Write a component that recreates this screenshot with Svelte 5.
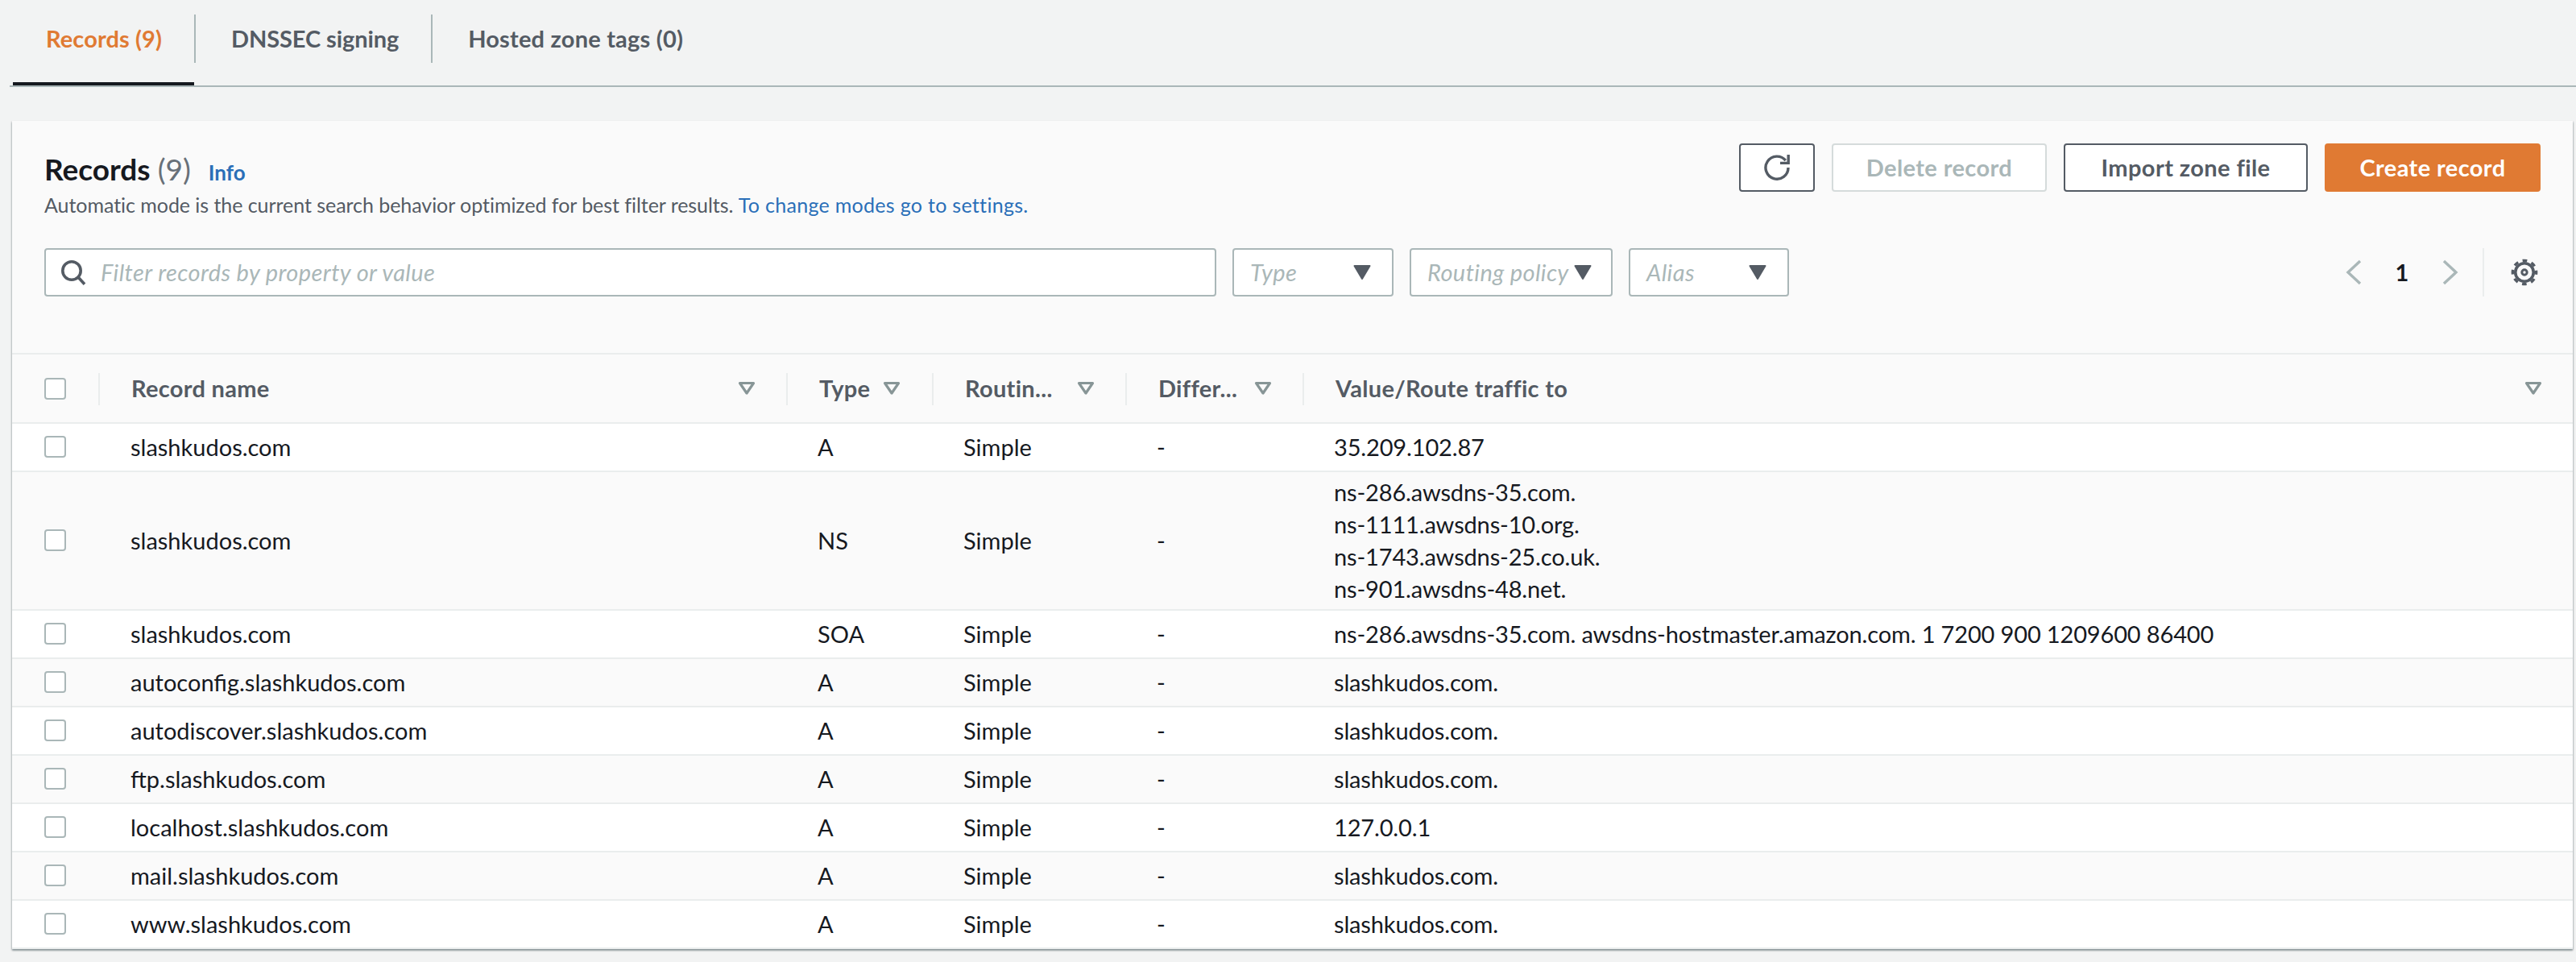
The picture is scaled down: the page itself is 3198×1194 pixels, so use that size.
<script>
  const tabs = [
    { label: "Records (9)", active: true },
    { label: "DNSSEC signing" },
    { label: "Hosted zone tags (0)" },
  ];

  const columns = ["Record name", "Type", "Routin...", "Differ...", "Value/Route traffic to"];

  const records = [
    { name: "slashkudos.com", type: "A", value: ["35.209.102.87"] },
    {
      name: "slashkudos.com",
      type: "NS",
      value: [
        "ns-286.awsdns-35.com.",
        "ns-1111.awsdns-10.org.",
        "ns-1743.awsdns-25.co.uk.",
        "ns-901.awsdns-48.net.",
      ],
    },
    {
      name: "slashkudos.com",
      type: "SOA",
      value: ["ns-286.awsdns-35.com. awsdns-hostmaster.amazon.com. 1 7200 900 1209600 86400"],
    },
    { name: "autoconfig.slashkudos.com", type: "A", value: ["slashkudos.com."] },
    { name: "autodiscover.slashkudos.com", type: "A", value: ["slashkudos.com."] },
    { name: "ftp.slashkudos.com", type: "A", value: ["slashkudos.com."] },
    { name: "localhost.slashkudos.com", type: "A", value: ["127.0.0.1"] },
    { name: "mail.slashkudos.com", type: "A", value: ["slashkudos.com."] },
    { name: "www.slashkudos.com", type: "A", value: ["slashkudos.com."] },
  ];

  const selects = [
    { label: "Type", width: "select--type" },
    { label: "Routing policy", width: "select--routing" },
    { label: "Alias", width: "select--alias" },
  ];
</script>

<div class="page">
  <div class="tabs">
    {#each tabs as tab}
      <div class="tab" class:tab--active={tab.active}><span class="tab__label">{tab.label}</span></div>
    {/each}
  </div>

  <section class="panel">
    <header class="panel__header">
      <div class="panel__top">
        <div class="panel__title">
          <h2>Records <span class="count">(9)</span> <a class="info" href="#info">Info</a></h2>
          <p>
            Automatic mode is the current search behavior optimized for best filter results.
            <a href="#settings">To change modes go to settings.</a>
          </p>
        </div>
        <div class="actions">
          <button class="btn btn--icon" aria-label="Refresh">
            <svg width="32" height="32" viewBox="0 0 16 16" fill="none" stroke="#545b64" stroke-width="1.7">
              <path d="M13.4 3.6A7 7 0 1 0 15 8" />
              <path d="M15.1 0v5.2H10" />
            </svg>
          </button>
          <button class="btn btn--disabled">Delete record</button>
          <button class="btn btn--import">Import zone file</button>
          <button class="btn btn--primary">Create record</button>
        </div>
      </div>

      <div class="filters">
        <div class="search">
          <svg width="32" height="32" viewBox="0 0 16 16" fill="none" stroke="#545b64" stroke-width="1.8">
            <circle cx="7" cy="7" r="5.6" />
            <path d="M11 11l4 4.4" />
          </svg>
          <span>Filter records by property or value</span>
        </div>
        {#each selects as select}
          <div class="select {select.width}">
            <span>{select.label}</span>
            <svg width="22" height="18" viewBox="0 0 22 18">
              <path d="M1.5 1h19L11 17z" fill="#545b64" stroke="#545b64" stroke-linejoin="round" stroke-width="2" />
            </svg>
          </div>
        {/each}
        <div class="pager">
          <svg width="20" height="32" viewBox="0 0 20 32" fill="none" stroke="#aab7b8" stroke-width="3.4">
            <path d="M18 2L3 16l15 14" />
          </svg>
          <span class="pager__num">1</span>
          <svg width="20" height="32" viewBox="0 0 20 32" fill="none" stroke="#aab7b8" stroke-width="3.4">
            <path d="M2 2l15 14L2 30" />
          </svg>
          <span class="pager__divider"></span>
          <svg width="34" height="34" viewBox="0 0 16 16" fill="none" stroke="#545b64">
            <circle cx="8" cy="8" r="5.3" stroke-width="1.7" />
            <circle cx="8" cy="8" r="6.9" stroke-width="1.6" stroke-dasharray="2.7 2.72" stroke-dashoffset="1.35" />
            <circle cx="8" cy="8" r="1.5" stroke-width="1.4" />
          </svg>
        </div>
      </div>
    </header>

    <div class="table">
      <div class="row row--head">
        <div class="cell cell--check"><span class="checkbox"></span></div>
        {#each columns as col, i}
          <div class="cell cell--head" class:cell--tight={i === 1}>
            <span>{col}</span>
            <svg class="filter" width="22" height="18" viewBox="0 0 22 18" fill="none" stroke="#879596" stroke-width="3.2" stroke-linejoin="round">
              <path d="M2.5 2.5h17L11 15z" />
            </svg>
          </div>
        {/each}
      </div>
      {#each records as record}
        <div class="row row--body">
          <div class="cell cell--check"><span class="checkbox"></span></div>
          <div class="cell cell--name">{record.name}</div>
          <div class="cell">{record.type}</div>
          <div class="cell">Simple</div>
          <div class="cell">-</div>
          <div class="cell cell--value">
            {#each record.value as line}
              <div>{line}</div>
            {/each}
          </div>
        </div>
      {/each}
    </div>
  </section>
</div>

<style>
  :global(body) {
    background: #f2f3f3;
  }

  .page {
    height: 1194px;
    box-sizing: border-box;
    font-family: "Lato", "Open Sans", sans-serif;
    font-size: 29px;
    line-height: 40px;
    color: #16191f;
    overflow: hidden;
  }

  .tabs {
    display: flex;
    height: 106px;
    margin: 0 0 0 12px;
    border-bottom: 2px solid #aab7b8;
  }

  .tab {
    position: relative;
    height: 106px;
    box-sizing: border-box;
    padding: 18px 0 0 3px;
    font-weight: 700;
    letter-spacing: -0.1px;
    color: #545b64;
  }

  .tab:last-child {
    letter-spacing: 0.2px;
  }

  .tab__label {
    display: block;
    height: 60px;
    line-height: 60px;
    padding: 0 40px 0 41px;
    border-right: 2px solid #aab7b8;
  }

  .tab:last-child .tab__label {
    border-right: 0;
  }

  .tab--active {
    padding-left: 4px;
    color: #e07a33;
    letter-spacing: 0.1px;
  }

  .tab--active::after {
    content: "";
    position: absolute;
    left: 4px;
    right: 2px;
    bottom: 0;
    height: 4px;
    background: #16191f;
  }

  .panel {
    margin: 42px 4px 0 15px;
    background: #fafafa;
    box-shadow:
      0 2px 2px rgba(0, 28, 36, 0.3),
      1px 1px 2px rgba(0, 28, 36, 0.15),
      -1px 1px 2px rgba(0, 28, 36, 0.15);
  }

  .panel__header {
    height: 290px;
    box-sizing: border-box;
    padding: 28px 40px 0;
    border-bottom: 2px solid #eaeded;
  }

  .panel__top {
    display: flex;
    justify-content: space-between;
    height: 130px;
  }

  h2 {
    margin: 8px 0 0;
    font-size: 37px;
    line-height: 48px;
    font-weight: 700;
  }

  .count {
    font-weight: 400;
    color: #687078;
  }

  .info {
    margin-left: 13px;
    font-size: 26px;
    font-weight: 700;
  }

  a {
    color: #2a6fb8;
    text-decoration: none;
  }

  .panel__title p {
    margin: 0;
    font-size: 25px;
    line-height: 32px;
    letter-spacing: -0.05px;
    color: #545b64;
  }

  .panel__title p a {
    letter-spacing: 0.3px;
  }

  .actions {
    display: flex;
    gap: 21px;
  }

  .btn {
    width: 267px;
    height: 60px;
    box-sizing: border-box;
    padding: 0;
    border: 2px solid #545b64;
    border-radius: 4px;
    background: #fff;
    font: inherit;
    font-weight: 700;
    letter-spacing: 0.4px;
    color: #545b64;
  }

  .btn--icon {
    display: flex;
    align-items: center;
    justify-content: center;
    width: 94px;
  }

  .btn--import {
    width: 303px;
  }

  .btn--disabled {
    border-color: #d5dbdb;
    color: #aab7b8;
  }

  .btn--primary {
    width: 268px;
    border-color: #e07a33;
    background: #e07a33;
    color: #fff;
  }

  .filters {
    display: flex;
    gap: 20px;
  }

  .search,
  .select {
    display: flex;
    align-items: center;
    height: 60px;
    box-sizing: border-box;
    border: 2px solid #aab7b8;
    border-radius: 4px;
    background: #fff;
    font-style: italic;
    letter-spacing: 0.4px;
    color: #aab7b8;
  }

  .search {
    width: 1455px;
    gap: 18px;
    padding-left: 18px;
  }

  .select {
    justify-content: space-between;
    padding: 0 26px 0 20px;
  }

  .select--type {
    width: 200px;
  }

  .select--routing {
    width: 252px;
    padding-right: 24px;
  }

  .select--alias {
    width: 199px;
  }

  .pager {
    display: flex;
    align-items: center;
    margin-left: auto;
    height: 60px;
    padding-right: 3px;
  }

  .pager__num {
    width: 100px;
    text-align: center;
    font-weight: 700;
  }

  .pager__divider {
    width: 2px;
    height: 60px;
    margin: 0 33px 0 30px;
    background: #eaeded;
  }

  .row {
    display: grid;
    grid-template-columns: 107px 854px 181px 240px 220px 1fr;
    border-bottom: 2px solid #eaeded;
  }

  .row--head {
    height: 86px;
    box-sizing: border-box;
    font-weight: 700;
    letter-spacing: 0.3px;
    color: #545b64;
  }

  .row--body {
    min-height: 60px;
    box-sizing: border-box;
    background: #fff;
  }

  .row--body:nth-child(odd) {
    background: #fafafa;
  }

  .cell {
    display: flex;
    flex-direction: column;
    justify-content: center;
    padding-left: 39px;
  }

  .cell--check {
    padding-left: 40px;
  }

  .cell--name {
    padding-left: 40px;
  }

  .cell--value {
    padding-top: 5px;
    padding-bottom: 5px;
    letter-spacing: -0.15px;
  }

  .cell--head {
    position: relative;
    flex-direction: row;
    align-items: center;
    justify-content: space-between;
    padding: 0 38px 0 41px;
  }

  .cell--tight {
    justify-content: flex-start;
    gap: 16px;
    padding-right: 0;
  }

  .cell--head::before {
    content: "";
    position: absolute;
    left: 0;
    top: 23px;
    width: 2px;
    height: 40px;
    background: #eaeded;
  }

  .checkbox {
    display: block;
    width: 27px;
    height: 27px;
    box-sizing: border-box;
    border: 2px solid #aab7b8;
    border-radius: 4px;
    background: #fff;
  }

  .row--body .checkbox {
    margin-top: -2px;
  }
</style>
